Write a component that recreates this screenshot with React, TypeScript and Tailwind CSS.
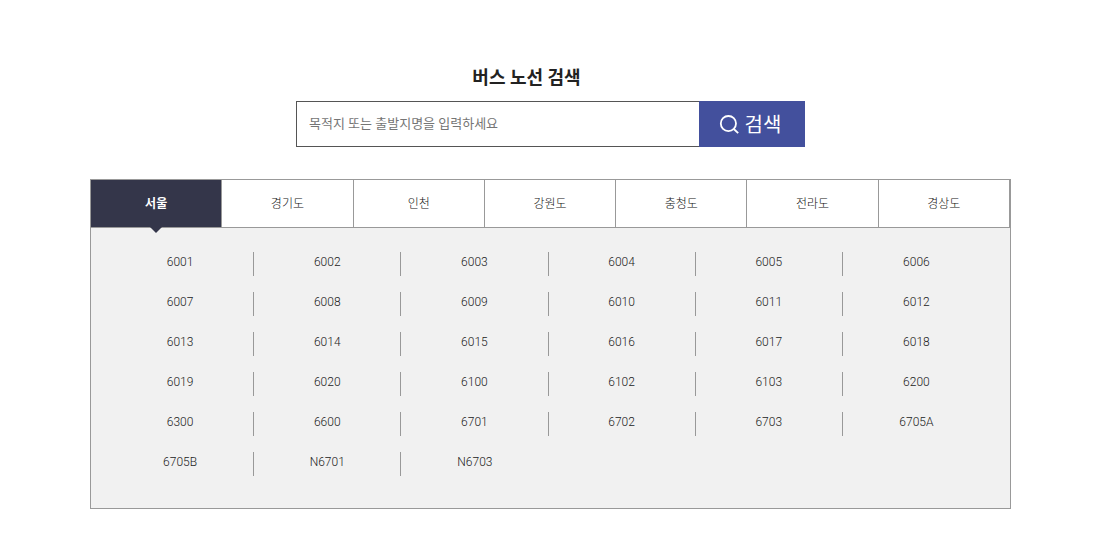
import { useState } from "react";

const regions = ["서울", "경기도", "인천", "강원도", "충청도", "전라도", "경상도"];

const routes = [
  "6001", "6002", "6003", "6004", "6005", "6006",
  "6007", "6008", "6009", "6010", "6011", "6012",
  "6013", "6014", "6015", "6016", "6017", "6018",
  "6019", "6020", "6100", "6102", "6103", "6200",
  "6300", "6600", "6701", "6702", "6703", "6705A",
  "6705B", "N6701", "N6703",
];

function SearchIcon() {
  return (
    <svg viewBox="0 0 20 20" className="size-5" fill="none" stroke="currentColor" strokeWidth="1.8" aria-hidden="true">
      <circle cx="9.4" cy="8.6" r="7.6" />
      <path d="M14.8 14 L19.2 18.2" />
    </svg>
  );
}

function RouteSearch() {
  return (
    <form className="mx-auto w-full max-w-[509px]" onSubmit={(e) => e.preventDefault()}>
      <label htmlFor="route-search" className="block pr-12 text-center text-lg leading-6 font-bold text-[#222]">
        버스 노선 검색
      </label>
      <div className="mt-[11px] flex h-[46px]">
        <input
          id="route-search"
          type="text"
          placeholder="목적지 또는 출발지명을 입력하세요"
          className="min-w-0 flex-1 border border-r-0 border-[#555] bg-white px-3 text-[13px] text-[#333] outline-none placeholder:text-[#757575]"
        />
        <button type="submit" className="flex w-[106px] items-center justify-center gap-1.5 bg-[#43509d] pt-0.5 pr-1 text-xl text-white">
          <SearchIcon />
          검색
        </button>
      </div>
    </form>
  );
}

export default function App() {
  const [active, setActive] = useState(0);

  return (
    <main className="bg-white pt-[66px] pr-[101px] pb-[26px] pl-[90px] font-['Roboto','Noto_Sans_CJK_KR',sans-serif]">
      <RouteSearch />
      <section className="mt-8 border border-[#999] bg-[#f1f1f1]">
        <div role="tablist" className="grid h-12 grid-cols-7 border-b border-[#999] bg-white">
          {regions.map((name, i) => (
            <button
              key={name}
              type="button"
              role="tab"
              aria-selected={i === active}
              onClick={() => setActive(i)}
              className={
                i === active
                  ? "relative border-r border-[#999] bg-[#34364a] text-xs font-bold text-white"
                  : "border-r border-[#999] text-xs font-light text-[#111]"
              }
            >
              {name}
              {i === active && (
                <svg viewBox="0 0 12 6" className="absolute top-full left-1/2 h-1.5 w-3 -translate-x-1/2" aria-hidden="true">
                  <path d="M0 0H12L6 6Z" fill="#34364a" />
                </svg>
              )}
            </button>
          ))}
        </div>
        <ul className="grid grid-cols-6 gap-y-4 pt-6 pr-5 pb-8 pl-4">
          {routes.map((route, i) => (
            <li
              key={route}
              className={
                i % 6 === 5 || i === routes.length - 1
                  ? "h-6 text-center text-xs leading-5 font-light text-[#222]"
                  : "h-6 border-r border-[#999] text-center text-xs leading-5 font-light text-[#222]"
              }
            >
              <a href="#">{route}</a>
            </li>
          ))}
        </ul>
      </section>
    </main>
  );
}
